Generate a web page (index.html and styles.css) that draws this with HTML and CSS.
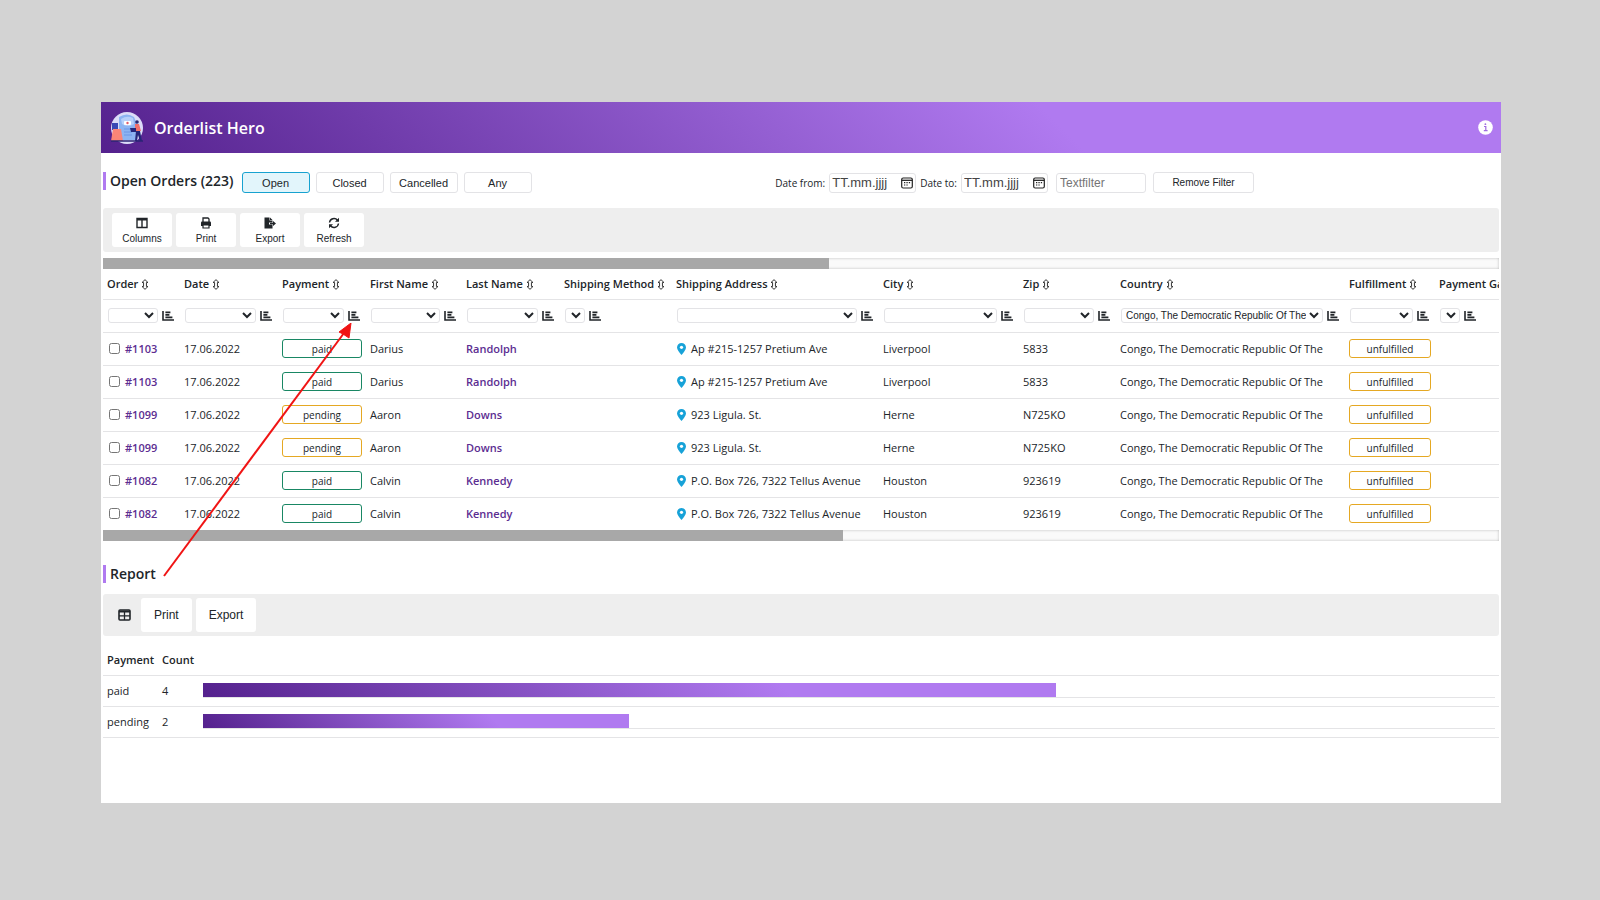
FILE: index.html
```html
<!DOCTYPE html>
<html lang="en">
<head>
    <meta charset="UTF-8">
    <meta name="viewport" content="width=device-width, initial-scale=1.0">
    <title>Orderlist Hero</title>
    <link rel="stylesheet" href="styles.css">
</head>
<body>
    <!-- shared icons -->
    <svg class="sprite" aria-hidden="true">
        <symbol id="icon-report" viewBox="0 0 12 10">
            <path d="M1 0v9h11" fill="none" stroke="#212529" stroke-width="1.6"/>
            <path d="M3.4 1.4h5M3.4 3.9h4M3.4 6.4h7" fill="none" stroke="#212529" stroke-width="1.6"/>
        </symbol>
        <symbol id="icon-sort" viewBox="0 0 7 10">
            <path d="M3.5.6 6.2 3.2H4.8v3.6h1.4L3.5 9.4.8 6.8h1.4V3.2H.8z" fill="none" stroke="#333" stroke-width=".9"/>
        </symbol>
        <symbol id="icon-pin" viewBox="0 0 9 12">
            <path d="M4.5 0C2 0 0 2 0 4.4 0 6.6 2.6 9.8 4.5 12 6.4 9.8 9 6.6 9 4.4 9 2 7 0 4.5 0z" fill="#17a2d8"/>
            <circle cx="4.5" cy="4.3" r="1.6" fill="#fff"/>
        </symbol>
        <symbol id="icon-calendar" viewBox="0 0 12 12">
            <rect x=".7" y="1" width="10.6" height="10" rx="1.5" fill="none" stroke="#222" stroke-width="1.2"/>
            <path d="M.7 3.3h10.6" stroke="#222" stroke-width="1.3"/>
            <path d="M3 5.6h1.3M5.4 5.6h1.3M7.8 5.6h1.3M3 8h1.3M5.4 8h1.3" stroke="#222" stroke-width="1.2"/>
        </symbol>
    </svg>

    <div class="app">
        <header class="app-header">
            <svg class="logo" viewBox="0 0 34 34">
                <circle cx="17" cy="17" r="16" fill="#dcdcf8"/>
                <path d="M9 6q8-5 15 0l3 7v16H9z" fill="#8db4f2"/>
                <path d="M11 8q6-4 12-1l1 6q-6 4-12 0z" fill="#b7d0fa"/>
                <rect x="14" y="10" width="7" height="4" rx="1" fill="#fff"/>
                <circle cx="17.5" cy="12" r="1.2" fill="#e05a6a"/>
                <path d="M2 12h6v7H2z" fill="#3a48b5"/>
                <path d="M3 18h8l2 12H1z" fill="#fb8577"/>
                <path d="M14 18h6M14 21h8M14 24h8" stroke="#6c96e6"/>
                <circle cx="27" cy="11" r="1.8" fill="#2a2a72"/>
                <path d="M25 13h4l2 7h-6z" fill="#f0706b"/>
                <path d="M20 17h6v4h-5zM26 20h4l2 10h-2l-2-6-1 6h-2z" fill="#26277a"/>
                <path d="M1 30h32" stroke="#2b2474" stroke-width="1.5"/>
            </svg>
            <h1>Orderlist Hero</h1>
            <button class="info" aria-label="Info">
                <svg viewBox="0 0 15 15"><circle cx="7.5" cy="7.5" r="7.3" fill="#fff"/><path d="M6 6.5h1.8v4M5.8 10.7h3.8" fill="none" stroke="#a06ce0" stroke-width="1.2"/><circle cx="7.4" cy="4.2" r=".9" fill="#a06ce0"/></svg>
            </button>
        </header>

        <main>
            <div class="filter-bar">
                <h2>Open Orders (223)</h2>
                <div class="status-buttons">
                    <button class="btn active">Open</button>
                    <button class="btn">Closed</button>
                    <button class="btn">Cancelled</button>
                    <button class="btn">Any</button>
                </div>
                <div class="filters">
                    <label for="date-from">Date from:</label>
                    <span class="date-field">
                        <input type="text" id="date-from" value="TT.mm.jjjj">
                        <svg><use href="#icon-calendar"/></svg>
                    </span>
                    <label for="date-to">Date to:</label>
                    <span class="date-field">
                        <input type="text" id="date-to" value="TT.mm.jjjj">
                        <svg><use href="#icon-calendar"/></svg>
                    </span>
                    <input type="text" class="text-filter" placeholder="Textfilter" aria-label="Textfilter">
                    <button class="btn remove">Remove Filter</button>
                </div>
            </div>

            <div class="toolbar">
                <button class="tool">
                    <svg viewBox="0 0 12 12"><path d="M1 1.5h10v9H1zM6 2v8" fill="none" stroke="#212529" stroke-width="1.4"/><path d="M1 2.5h10" stroke="#212529" stroke-width="2"/></svg>
                    Columns
                </button>
                <button class="tool">
                    <svg viewBox="0 0 12 12"><path d="M3 5V1h5l1 1v3" fill="none" stroke="#212529" stroke-width="1.3"/><path d="M1 5.5q0-1 1-1h8q1 0 1 1V9H1z" fill="#212529"/><path d="M3 8h6v3H3z" fill="#fff" stroke="#212529" stroke-width="1.2"/></svg>
                    Print
                </button>
                <button class="tool">
                    <svg viewBox="0 0 12 12"><path d="M.5.5h5v3h3v2H5v2h3.5v4h-8z" fill="#212529"/><path d="M6 .5 8.5 3H6zM9 4l3 2.5L9 9V7.2H6V5.8h3z" fill="#212529"/></svg>
                    Export
                </button>
                <button class="tool">
                    <svg viewBox="0 0 12 12"><path d="M1.5 5.5a4.5 4.5 0 0 1 8-2.2M10.5 6.5a4.5 4.5 0 0 1-8 2.2" fill="none" stroke="#212529" stroke-width="1.4"/><path d="M11 .8v4H7zM1 11.2v-4h4z" fill="#212529"/></svg>
                    Refresh
                </button>
            </div>

            <div class="scrollbar"><div class="thumb" style="width: 52%"></div></div>
            <div class="table-wrap">
                <table class="orders">
                    <colgroup>
                        <col class="w-order"><col class="w-date"><col class="w-payment"><col class="w-name"><col class="w-date">
                        <col class="w-method"><col class="w-address"><col class="w-city"><col class="w-zip">
                        <col class="w-country"><col class="w-fulfillment"><col class="w-gateway">
                    </colgroup>
                    <thead>
                        <tr id="head-row"></tr>
                        <tr id="select-row"></tr>
                    </thead>
                    <tbody id="orders"></tbody>
                </table>
            </div>
            <div class="scrollbar"><div class="thumb" style="width: 53%"></div></div>

            <h2 class="report-title">Report</h2>
            <div class="toolbar report-toolbar">
                <button class="grid-button" aria-label="Table">
                    <svg viewBox="0 0 13 12"><rect x="1" y="1" width="11" height="10" rx="1" fill="none" stroke="#212529" stroke-width="1.6"/><path d="M1 2.5h11" stroke="#212529" stroke-width="2"/><path d="M1 6.8h11M6.5 2v9" stroke="#212529" stroke-width="1.3"/></svg>
                </button>
                <button class="tool">Print</button>
                <button class="tool">Export</button>
            </div>
            <table class="report">
                <thead>
                    <tr><th class="w-label">Payment</th><th class="w-count">Count</th><th></th></tr>
                </thead>
                <tbody>
                    <tr><td>paid</td><td>4</td><td><div class="track"><div class="bar" style="width: 66%"></div></div></td></tr>
                    <tr><td>pending</td><td>2</td><td><div class="track"><div class="bar" style="width: 33%"></div></div></td></tr>
                </tbody>
            </table>
        </main>

        <svg class="pointer" viewBox="0 0 190 254">
            <path d="M1 253 181 10" stroke="#f01414" stroke-width="2"/>
            <path d="M188 0 176 9l4 2 6 4z" fill="#f01414" stroke="#f01414"/>
        </svg>
    </div>

    <script src="script.js"></script>
</body>
</html>
```
FILE: script.js
```js
const columns = ['Order', 'Date', 'Payment', 'First Name', 'Last Name', 'Shipping Method',
    'Shipping Address', 'City', 'Zip', 'Country', 'Fulfillment', 'Payment Gateway'];
const country = 'Congo, The Democratic Republic Of The';

const orders = [
    ['#1103', 'paid', 'Darius', 'Randolph', 'Ap #215-1257 Pretium Ave', 'Liverpool', '5833'],
    ['#1103', 'paid', 'Darius', 'Randolph', 'Ap #215-1257 Pretium Ave', 'Liverpool', '5833'],
    ['#1099', 'pending', 'Aaron', 'Downs', '923 Ligula. St.', 'Herne', 'N725KO'],
    ['#1099', 'pending', 'Aaron', 'Downs', '923 Ligula. St.', 'Herne', 'N725KO'],
    ['#1082', 'paid', 'Calvin', 'Kennedy', 'P.O. Box 726, 7322 Tellus Avenue', 'Houston', '923619'],
    ['#1082', 'paid', 'Calvin', 'Kennedy', 'P.O. Box 726, 7322 Tellus Avenue', 'Houston', '923619']
];

document.getElementById('head-row').innerHTML = columns.map(name =>
    `<th>${name} <svg class="sort"><use href="#icon-sort"/></svg></th>`
).join('');

document.getElementById('select-row').innerHTML = columns.map(name => {
    const small = name === 'Shipping Method' || name === 'Payment Gateway';
    return `<td><div class="column-filter">
        <select class="${small ? 'small' : ''}" aria-label="${name}"><option>${name === 'Country' ? country : ''}</option></select>
        <svg class="report-icon"><use href="#icon-report"/></svg>
    </div></td>`;
}).join('');

document.getElementById('orders').innerHTML = orders.map(([id, payment, first, last, address, city, zip]) => `
    <tr>
        <td><span class="order-id"><input type="checkbox" aria-label="${id}"><a href="#">${id}</a></span></td>
        <td>17.06.2022</td>
        <td><span class="pill ${payment}">${payment}</span></td>
        <td>${first}</td>
        <td><a href="#">${last}</a></td>
        <td></td>
        <td><span class="address"><svg class="pin"><use href="#icon-pin"/></svg>${address}</span></td>
        <td>${city}</td>
        <td>${zip}</td>
        <td>${country}</td>
        <td><span class="pill pending">unfulfilled</span></td>
        <td></td>
    </tr>`
).join('');
```
FILE: styles.css
```css
* {
    box-sizing: border-box;
}

body {
    margin: 0;
    padding: 102px 99px 97px 101px;
    min-height: 100vh;
    display: flex;
    background: #d3d3d3;
    color: #212529;
    font-family: "Open Sans", sans-serif;
    font-size: 11px;
}

.sprite {
    position: absolute;
    width: 0;
    height: 0;
}

.app {
    position: relative;
    flex: 1;
    min-width: 0;
    background: #fff;
}

.app-header {
    display: flex;
    align-items: center;
    height: 51px;
    padding: 0 8px 0 9px;
    gap: 10px;
    background: linear-gradient(45deg, #54218d, #b07af0 68%);
}

.logo {
    width: 34px;
    height: 34px;
}

h1 {
    margin: 0;
    color: #fff;
    font-size: 16px;
    font-weight: 600;
}

h2 {
    margin: 0;
    padding-left: 4px;
    border-left: 3px solid #b07af0;
    font-size: 14px;
    font-weight: 600;
    line-height: 18px;
}

button {
    font-family: "Liberation Sans", sans-serif;
    color: #212529;
    cursor: pointer;
}

.info {
    margin-left: auto;
    padding: 0;
    border: none;
    background: none;
}

.info svg {
    display: block;
    width: 15px;
    height: 15px;
}

main {
    padding: 0 2px;
}

.filter-bar {
    display: flex;
    align-items: center;
    height: 55px;
    padding-top: 4px;
}

.filter-bar h2 {
    margin-bottom: 3px;
}

.status-buttons {
    display: flex;
    gap: 6px;
    margin-left: 8px;
}

.btn {
    width: 68px;
    height: 21px;
    padding: 0;
    border: 1px solid #e3e3e6;
    border-radius: 3px;
    background: #fff;
    font-size: 11px;
}

.btn.active {
    border-color: #17a2d0;
    background: #e2f5fb;
}

.filters {
    display: flex;
    align-items: center;
    margin-left: auto;
    margin-right: 245px;
    font-size: 10px;
}

.filters label {
    margin-left: 4px;
}

.date-field {
    display: flex;
    align-items: center;
    width: 87px;
    height: 20px;
    margin-left: 4px;
    padding-right: 2px;
    border: 1px solid #e3e3e6;
    border-radius: 3px;
}

.date-field svg {
    flex: none;
    width: 12px;
    height: 12px;
}

.date-field input {
    flex: 1;
    min-width: 0;
    padding: 0 2px;
    border: none;
    color: #444;
    font-family: "Liberation Sans", sans-serif;
    font-size: 13px;
}

.text-filter {
    width: 90px;
    height: 20px;
    margin: 0 7px 0 8px;
    padding: 0 3px;
    border: 1px solid #e3e3e6;
    border-radius: 3px;
    font-family: "Liberation Sans", sans-serif;
    font-size: 12px;
}

.btn.remove {
    width: 101px;
    font-size: 10px;
}

.toolbar {
    display: flex;
    align-items: center;
    gap: 4px;
    height: 44px;
    padding: 0 9px;
    margin-bottom: 6px;
    border-radius: 3px;
    background: #eee;
}

.tool {
    display: flex;
    flex-direction: column;
    align-items: center;
    justify-content: center;
    gap: 4px;
    width: 60px;
    height: 34px;
    padding: 0;
    border: none;
    border-radius: 3px;
    background: #fff;
    font-size: 10px;
}

.tool svg {
    width: 12px;
    height: 12px;
}

.scrollbar {
    height: 11px;
    background: #fafafa;
    box-shadow: inset 0 0 3px #bbb;
}

.thumb {
    height: 11px;
    background: #a8a8a8;
}

.table-wrap {
    overflow: hidden;
}

table {
    border-collapse: collapse;
    table-layout: fixed;
}

th,
td {
    padding: 0 4px;
    text-align: left;
    white-space: nowrap;
    border-bottom: 1px solid #e4e4e6;
}

th {
    font-weight: 600;
}

.orders {
    width: 1460px;
}

.orders tr {
    height: 33px;
}

.orders #head-row {
    height: 30px;
}

.orders tr:last-child td {
    border-bottom: none;
}

.orders #select-row td {
    border-bottom: 1px solid #e4e4e6;
}

.w-order { width: 77px; }
.w-date { width: 98px; }
.w-payment { width: 88px; }
.w-name { width: 96px; }
.w-method { width: 112px; }
.w-address { width: 207px; }
.w-city { width: 140px; }
.w-zip { width: 97px; }
.w-country { width: 229px; }
.w-fulfillment { width: 90px; }

.sort {
    width: 8px;
    height: 11px;
    vertical-align: -2px;
}

.column-filter {
    display: flex;
    align-items: center;
    gap: 4px;
    padding: 0 2px 0 1px;
}

select {
    flex: 1;
    min-width: 0;
    height: 15px;
    padding: 0;
    border: 1px solid #e3e3e6;
    border-radius: 3px;
    background: #fff;
    color: #212529;
    font-family: "Liberation Sans", sans-serif;
    font-size: 10px;
}

select.small {
    flex: none;
    width: 20px;
}

.report-icon {
    flex: none;
    width: 12px;
    height: 10px;
}

a {
    color: #5c2d91;
    font-weight: 600;
    text-decoration: none;
}

.order-id,
.address {
    display: flex;
    align-items: center;
    gap: 5px;
}

.order-id input {
    width: 11px;
    height: 11px;
    margin: 0 0 0 2px;
}

.pin {
    width: 9px;
    height: 12px;
    margin-left: 1px;
}

.pill {
    display: block;
    height: 19px;
    border: 1px solid;
    border-radius: 3px;
    font-size: 10px;
    line-height: 18px;
    text-align: center;
}

.pill.paid {
    border-color: #198764;
}

.pill.pending {
    border-color: #e5a823;
}

.report-title {
    margin: 24px 0 11px;
}

.report-toolbar {
    height: 42px;
    margin-bottom: 8px;
}

.report-toolbar .tool {
    width: auto;
    padding: 0 13px;
    font-size: 12px;
}

.grid-button {
    padding: 0 6px;
    border: none;
    background: none;
}

.grid-button svg {
    display: block;
    width: 13px;
    height: 12px;
}

.report {
    width: 100%;
}

.report tr {
    height: 31px;
}

.w-label { width: 55px; }
.w-count { width: 41px; }

.track {
    border-bottom: 1px solid #e4e4e6;
}

.bar {
    height: 14px;
    background: linear-gradient(45deg, #54218d, #b07af0 68%);
}

/* red arrow from the report title to the payment column */
.pointer {
    position: absolute;
    left: 62px;
    top: 221px;
    width: 190px;
    height: 254px;
    pointer-events: none;
}
```
